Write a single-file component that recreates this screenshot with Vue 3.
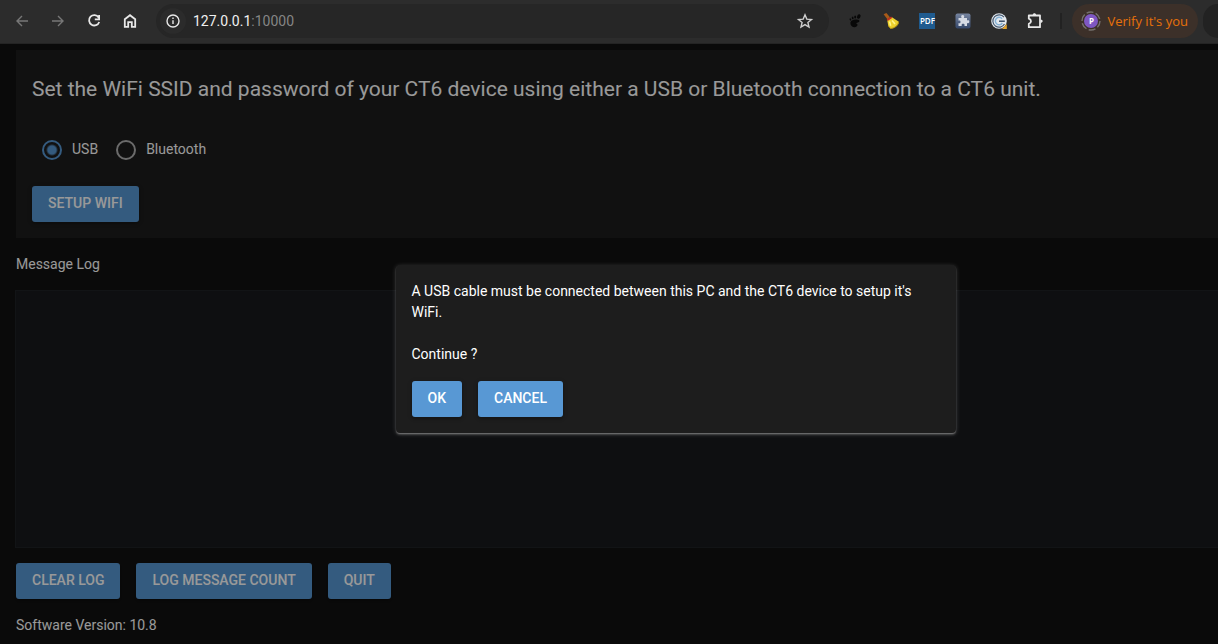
<script setup>
import { ref } from 'vue'

const connection = ref('usb')
const log = ref('')
const address = ref('127.0.0.1:10000')
</script>

<template>
  <div class="browser">
    <header class="toolbar">
      <nav class="nav">
        <button class="icon dim" aria-label="Back">
          <svg viewBox="0 0 16 16"><path d="M14 8H3M8 3 3 8l5 5" /></svg>
        </button>
        <button class="icon dim" aria-label="Forward">
          <svg viewBox="0 0 16 16"><path d="M2 8h11M8 3l5 5-5 5" /></svg>
        </button>
        <button class="icon" aria-label="Reload">
          <svg viewBox="0 0 16 16" class="bold"><path d="M12.6 4.4A5.2 5.2 0 1 0 13.2 9M13.1 2v4.3H8.8" /></svg>
        </button>
        <button class="icon" aria-label="Home">
          <svg viewBox="0 0 16 16" class="bold"><path d="M2.8 6.3 8 2.200l5.200 4.100v7.500H9.800V9.200H6.200v4.600H2.800z" /></svg>
        </button>
      </nav>

      <div class="address">
        <button class="icon info" aria-label="Site information">
          <svg viewBox="0 0 16 16"><circle cx="8" cy="8" r="6" /><path d="M8 7.300v3.800M8 4.600v1.500" /></svg>
        </button>
        <a class="url" :href="'http://' + address">127.0.0.1<span>:10000</span></a>
        <button class="icon star" aria-label="Bookmark">
          <svg viewBox="0 0 16 16"><path d="m8 1.800 1.800 4.300 4.700.4-3.600 3 1.100 4.600L8 11.600l-4 2.500 1.100-4.600-3.600-3 4.700-.4z" /></svg>
        </button>
      </div>

      <div class="extensions">
        <button class="icon" aria-label="Gnome integration">
          <svg viewBox="0 0 16 16" class="foot">
            <path d="M9.500 6.500c2.300 0 3.300.8 2.900 2-.4 1.100-2.600.9-3 1.700-.3.700 1.300.5 1.100 1.800-.3 1.500-1.800 2.400-3.400 2.200C4.700 13.900 3.300 12 3.400 10c.1-2.400 2.900-3.600 6.100-3.500z" />
            <ellipse cx="11.800" cy="3.500" rx="1.700" ry="2.400" transform="rotate(20 11.800 3.500)" />
            <ellipse cx="8.200" cy="3.900" rx="1" ry="1.500" />
            <ellipse cx="5.700" cy="4.900" rx=".9" ry="1.300" transform="rotate(-15 5.700 4.900)" />
            <ellipse cx="3.400" cy="6.500" rx=".8" ry="1.200" transform="rotate(-25 3.400 6.500)" />
          </svg>
        </button>
        <button class="icon" aria-label="Cleaner">
          <svg viewBox="0 0 16 16" class="plain">
            <path d="M.6 1.200 3.400.1 7 4.300 4.600 6.400z" fill="#a85a18" />
            <path d="M4.300 7.500 9 4.200l6.800 4.600c.4 2.900-3.900 6.800-8.300 7L5.300 13z" fill="#ecd02c" />
            <path d="m6.500 8.500 1.200 4.300M9 7.400l3 3.500" fill="none" stroke="#fff48a" stroke-width="1.600" />
            <path d="M4.200 7.300 8.600 4.300" stroke="#c32e22" stroke-width="1.700" />
            <path d="m5.300 13 2.400 2.500c4-.3 7.500-3.300 7.900-6.600" stroke="#a88711" stroke-width=".9" fill="none" />
          </svg>
        </button>
        <button class="icon pdf" aria-label="PDF tools">PDF</button>
        <button class="icon" aria-label="Extension manager">
          <svg viewBox="0 0 16 16" class="plain">
            <defs>
              <linearGradient id="tile" x2="0" y2="1"><stop stop-color="#76849f" /><stop offset="1" stop-color="#34476a" /></linearGradient>
            </defs>
            <rect x=".5" y=".5" width="15" height="15" rx="2" fill="url(#tile)" />
            <path d="M3.500 5h3.100C5.600 3.200 6.400 2 7.700 2s2.100 1.200 1.100 3h3.200v2.600c1.400-.6 2.300-.1 2.300 1.100s-.9 1.800-2.300 1.200V13H9.400c.6-1.700-.2-2.300-1.300-2.300S6.200 11.300 6.800 13H3.500v-3c1.400.5 2-.1 2-1.100S4.900 7.300 3.500 7.800z" fill="#d5dae4" />
          </svg>
        </button>
        <button class="icon" aria-label="Search companion">
          <svg viewBox="0 0 16 16" class="plain">
            <circle cx="8" cy="8" r="7.800" fill="#e3e8ed" />
            <path d="M13 4.200A6.200 6.200 0 1 0 13.500 11" fill="none" stroke="#465a72" stroke-width="1.200" />
            <path d="M11 5.800A3.700 3.700 0 1 0 11.300 9.800" fill="none" stroke="#87b2d5" stroke-width="1.500" />
            <path d="M8 8.200h5.800" stroke="#30445f" stroke-width="1.400" />
            <path d="M15.800 11v5H11z" fill="#e3a52e" />
          </svg>
        </button>
        <button class="icon" aria-label="Extensions">
          <svg viewBox="0 0 16 16" class="bold puzzle">
            <path d="M1.800 2.500H13v11.700H1.800v-3.300c2.900-1 2.900-4.200 0-5.200z" />
            <path d="M5.700 2c0-2.400 3.400-2.400 3.400 0zM13.500 6.600c2.900 0 2.900 3.400 0 3.400z" class="knob" />
          </svg>
        </button>
      </div>
      <div class="divider"></div>
      <button class="profile">
        <span class="avatar">
          <svg viewBox="0 0 20 20"><circle cx="10" cy="10" r="9" /></svg>
          <span class="initial">P</span>
        </span>
        Verify it's you
      </button>
      <div class="menu"></div>
    </header>

    <div class="viewport">
      <main class="page">
        <section class="card">
          <h1>Set the WiFi SSID and password of your CT6 device using either a USB or Bluetooth connection to a CT6 unit.</h1>
          <div class="radios">
            <label><input v-model="connection" type="radio" name="connection" value="usb" /><span>USB</span></label>
            <label><input v-model="connection" type="radio" name="connection" value="bluetooth" /><span>Bluetooth</span></label>
          </div>
          <button class="btn">SETUP WIFI</button>
        </section>
        <label class="text" for="log">Message Log</label>
        <textarea id="log" v-model="log" class="log" readonly></textarea>
        <div class="actions">
          <button class="btn">CLEAR LOG</button>
          <button class="btn">LOG MESSAGE COUNT</button>
          <button class="btn">QUIT</button>
        </div>
        <div class="text">Software Version: 10.8</div>
      </main>

      <div class="backdrop">
        <div class="dialog" role="dialog" aria-modal="true">
          <p>A USB cable must be connected between this PC and the CT6 device to setup it's WiFi.</p>
          <p>Continue ?</p>
          <div class="actions">
            <button class="btn">OK</button>
            <button class="btn">CANCEL</button>
          </div>
        </div>
      </div>
    </div>
  </div>
</template>

<style>
body {
  margin: 0;
  background: #121212;
}
</style>

<style scoped>
* {
  box-sizing: border-box;
}

.browser {
  display: flex;
  flex-direction: column;
  height: 100vh;
  overflow: hidden;
  color: #fff;
  font: 14px/21px Roboto, sans-serif;
}

button {
  border: 0;
  font: inherit;
  color: inherit;
}

.toolbar {
  display: flex;
  align-items: center;
  flex: none;
  height: 44px;
  padding: 0 0 2px 14px;
  background: #2c2c2c;
  border-bottom: 1px solid #242424;
  font: 13px/20px "Noto Sans", sans-serif;
}

.nav,
.extensions {
  display: flex;
  gap: 20px;
}

.icon {
  flex: none;
  width: 16px;
  height: 16px;
  padding: 0;
  background: none;
  color: #e8e8e8;
}

.icon svg {
  display: block;
  width: 16px;
  height: 16px;
  overflow: visible;
  fill: none;
  stroke: currentColor;
  stroke-width: 1.4;
}

.icon.dim {
  color: #777;
}

.icon .bold {
  stroke-width: 1.8;
}

.icon .puzzle {
  stroke-linejoin: round;
}

.icon .knob {
  fill: currentColor;
  stroke: none;
}

.icon .foot {
  fill: #080808;
  stroke: none;
}

.icon .plain {
  stroke: none;
}

.address {
  display: flex;
  flex: 1;
  align-items: center;
  height: 34px;
  margin-left: 18px;
  padding: 0 16px 0 4px;
  border-radius: 17px;
  background: #262626;
}

.icon.info {
  display: grid;
  place-items: center;
  width: 26px;
  height: 26px;
  border-radius: 50%;
  background: #2b2b2b;
}

.url {
  flex: 1;
  margin-left: 7px;
  color: #f0f0f0;
  font: 14px/20px Roboto, sans-serif;
  text-decoration: none;
}

.url span {
  color: #858585;
}

.icon.star {
  color: #cfcfcf;
}

.extensions {
  margin-left: 18px;
}

.icon.pdf {
  background: #1f5b8f;
  color: #fff;
  font: 600 8px/16px "Open Sans", sans-serif;
}

.divider {
  width: 2px;
  height: 16px;
  margin: 0 10px 0 17px;
  background: #222;
}

.profile {
  display: flex;
  align-items: center;
  gap: 6px;
  height: 34px;
  padding: 0 10px 0 9px;
  border-radius: 17px;
  background: #3c3029;
  color: #e8710a;
  font-family: "Open Sans", sans-serif;
}

.avatar {
  display: grid;
  place-items: center;
  width: 20px;
  height: 20px;
}

.avatar > * {
  grid-area: 1 / 1;
}

.avatar svg {
  width: 20px;
  height: 20px;
  fill: none;
  stroke: #74706d;
  stroke-width: 1.4;
  stroke-dasharray: 7 2.4;
}

.initial {
  width: 14px;
  height: 14px;
  border-radius: 50%;
  background: #7e57c2;
  color: #fff;
  font: 700 8px/14px "Noto Sans", sans-serif;
  text-align: center;
}

.menu {
  width: 15px;
  height: 34px;
  margin-left: 5px;
  border-radius: 17px 0 0 17px;
  background: #222;
}

.viewport {
  position: relative;
  flex: 1;
  min-height: 0;
  overflow: hidden;
  background: #121212;
}

.page {
  display: flex;
  flex-direction: column;
  gap: 16px;
  padding: 6px 0 0 16px;
}

.card {
  display: flex;
  flex-direction: column;
  align-items: flex-start;
  gap: 16px;
  padding: 16px;
  background: #1d1d1d;
}

h1 {
  margin: 0;
  padding-bottom: 2px;
  font-size: 21px;
  font-weight: 400;
  line-height: 46px;
  white-space: nowrap;
}

.radios {
  display: flex;
  gap: 8px;
}

.radios label {
  display: flex;
  align-items: center;
  gap: 10px;
  height: 40px;
  padding-left: 10px;
}

.radios span {
  padding-bottom: 2px;
}

.radios input {
  appearance: none;
  width: 20px;
  height: 20px;
  margin: 0;
  border: 2px solid #b3b3b3;
  border-radius: 50%;
}

.radios input:checked {
  border-color: #5898d4;
  background: radial-gradient(circle, #5898d4 4px, transparent 6px);
}

.btn {
  height: 36px;
  padding: 0 16px 2px;
  border-radius: 3px;
  background: #5898d4;
  color: #fff;
  font-weight: 500;
  box-shadow: 0 1px 5px rgba(0, 0, 0, 0.2), 0 2px 2px rgba(0, 0, 0, 0.14);
}

.text {
  display: block;
}

.log {
  display: block;
  width: 100%;
  height: 256px;
  padding: 8px;
  border: 0;
  outline: 1px solid #1e2225;
  background: #181a1d;
  color: #fff;
  font: inherit;
  resize: none;
}

.actions {
  display: flex;
  gap: 16px;
}

.backdrop {
  position: absolute;
  inset: 0 -133px -10px 0;
  display: flex;
  align-items: center;
  justify-content: center;
  background: rgba(0, 0, 0, 0.4);
}

.dialog {
  display: flex;
  flex-direction: column;
  gap: 16px;
  width: 560px;
  padding: 16px;
  border-radius: 4px;
  background: #1d1d1d;
  box-shadow: 0 1px 5px rgba(255, 255, 255, 0.2), 0 2px 2px rgba(255, 255, 255, 0.14), 0 1px 1px rgba(255, 255, 255, 0.2);
}

.dialog p {
  margin: 0;
}

.dialog p + p {
  margin-top: 5px;
}
</style>
